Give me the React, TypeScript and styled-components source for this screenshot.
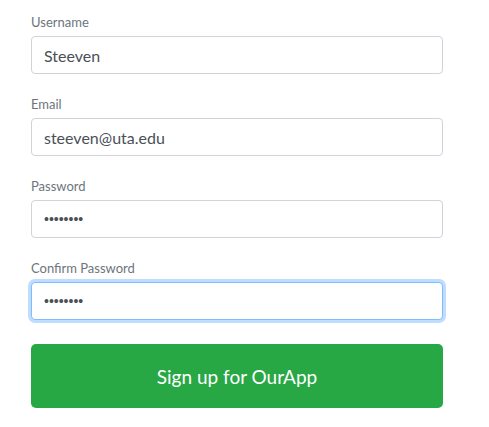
import React from "react";
import styled, { createGlobalStyle } from "styled-components";

const GlobalStyle = createGlobalStyle`
    html, body {
        margin: 0;
        padding: 0;
        background: #fff;
    }

    body {
        font-family: "Source Sans Pro", Lato, "Noto Sans", sans-serif;
        color: #212529;
    }
`;

const fields = [
    { label: "Username", type: "text", value: "Steeven" },
    { label: "Email", type: "email", value: "steeven@uta.edu" },
    { label: "Password", type: "password", value: "password" },
    { label: "Confirm Password", type: "password", value: "password", focused: true },
];

const App = () => {
    return (
        <Wrap>
            <GlobalStyle />
            <Form onSubmit={(e) => e.preventDefault()}>
                {fields.map((field) => (
                    <Group key={field.label}>
                        <Label>{field.label}</Label>
                        <Input
                            type={field.type}
                            defaultValue={field.value}
                            $focused={!!field.focused}
                            readOnly
                        />
                    </Group>
                ))}
                <SubmitButton type="submit">Sign up for OurApp</SubmitButton>
            </Form>
        </Wrap>
    );
};

export default App;

const Wrap = styled.div`
    padding: 12px 0 0 31px;
`;

const Form = styled.form`
    width: 412px;
    display: flex;
    flex-direction: column;
`;

const Group = styled.div`
    display: flex;
    flex-direction: column;
    margin-bottom: 20px;
`;

const Label = styled.label`
    font-size: 13px;
    line-height: 20px;
    color: #6c757d;
    margin-bottom: 4px;
`;

const Input = styled.input<{ $focused: boolean }>`
    box-sizing: border-box;
    height: 38px;
    width: 100%;
    padding: 6px 12px;
    font-family: inherit;
    font-size: 16px;
    color: #495057;
    background: #fff;
    border: 1px solid ${(props) => (props.$focused ? "#80bdff" : "#ced4da")};
    border-radius: 4px;
    outline: none;
    box-shadow: ${(props) =>
        props.$focused ? "0 0 0 3px rgba(0, 123, 255, 0.25)" : "none"};

    &[type="password"] {
        font-family: "Liberation Sans", sans-serif;
        font-size: 14px;
    }
`;

const SubmitButton = styled.button`
    margin-top: 4px;
    height: 64px;
    width: 100%;
    border: none;
    border-radius: 5px;
    background: #28a745;
    color: #fff;
    font-family: inherit;
    font-size: 19px;
    cursor: pointer;
`;
